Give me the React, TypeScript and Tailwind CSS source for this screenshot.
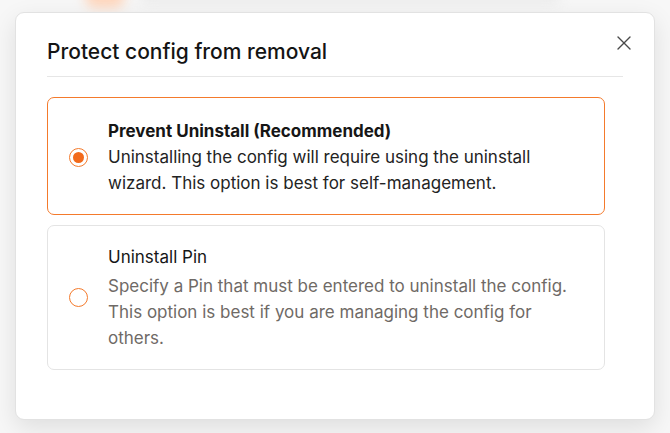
import { X } from 'lucide-react';

type Option = {
  id: string;
  title: string;
  description: string;
};

const options: Option[] = [
  {
    id: 'prevent',
    title: 'Prevent Uninstall (Recommended)',
    description: 'Uninstalling the config will require using the uninstall wizard. This option is best for self-management.',
  },
  {
    id: 'pin',
    title: 'Uninstall Pin',
    description: 'Specify a Pin that must be entered to uninstall the config. This option is best if you are managing the config for others.',
  },
];

function Radio({ checked }: { checked: boolean }) {
  return (
    <span className="flex h-[19px] w-[19px] flex-shrink-0 items-center justify-center rounded-full border-[1.5px] border-[#f47a2c]">
      {checked && <span className="h-[11px] w-[11px] rounded-full bg-[#f26a1b]" />}
    </span>
  );
}

export default function App() {
  const selected = 'prevent';

  return (
    <div
      className="relative h-[433px] w-[670px] overflow-hidden bg-[#f7f7f7]"
      style={{ fontFamily: 'Inter, "Noto Sans", sans-serif' }}
    >
      {/* blurred page behind the modal */}
      <div className="absolute left-[85px] top-[-14px] h-[22px] w-[40px] rounded-full bg-[#ffd6bc] blur-[6px]" />
      <div className="absolute left-[140px] top-[-10px] h-[14px] w-[420px] rounded-full bg-[#ececec] blur-[6px]" />

      <div className="absolute left-[15px] top-[12px] h-[408px] w-[640px] rounded-[9px] border border-[#e2e2e2] bg-white px-[31px] shadow-[0_8px_24px_rgba(0,0,0,0.10)]">
        <button className="absolute right-[18px] top-[18px] text-[#4a4a4a]">
          <X className="h-[24px] w-[24px]" strokeWidth={1.4} />
        </button>

        <div className="border-b border-[#e6e6e6] pb-[10px] pt-[25px]">
          <h2 className="text-[21px] font-medium leading-[28px] text-[#141414]">
            Protect config from removal
          </h2>
        </div>

        <div className="mr-[18px] mt-[20px] flex flex-col gap-[10px]">
          {options.map((o) => {
            const checked = o.id === selected;
            return (
              <label
                key={o.id}
                className={`flex items-center gap-[20px] rounded-[7px] border bg-white pl-[21px] pr-[24px] ${
                  checked ? 'border-[#f47a2c] pb-[18px] pt-[20px]' : 'border-[#e4e4e4] pb-[18px] pt-[18px]'
                }`}
              >
                <Radio checked={checked} />
                <div className="flex flex-col text-[17px]">
                  <span
                    className={`leading-[26px] text-[#161616] ${checked ? 'font-bold' : 'font-normal'}`}
                  >
                    {o.title}
                  </span>
                  <span
                    className={`leading-[26px] ${checked ? 'text-[#232323]' : 'mt-[3px] leading-[25px] text-[#6f6a66]'}`}
                  >
                    {o.description}
                  </span>
                </div>
              </label>
            );
          })}
        </div>
      </div>
    </div>
  );
}
